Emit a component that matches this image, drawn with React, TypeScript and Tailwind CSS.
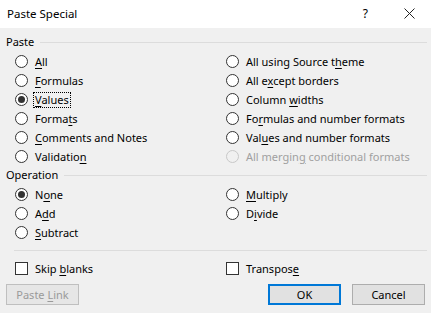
import React from "react";

const font = { fontFamily: '"Segoe UI", "Noto Sans", "Liberation Sans", sans-serif' };

function Label({ text, u, disabled }: { text: string; u: number; disabled?: boolean }) {
  return (
    <span className={disabled ? "text-[#a0a0a0]" : "text-black"}>
      {text.slice(0, u)}
      <span className="underline underline-offset-[2px]">{text[u]}</span>
      {text.slice(u + 1)}
    </span>
  );
}

function Radio({ text, u, checked, disabled, focus }: { text: string; u: number; checked?: boolean; disabled?: boolean; focus?: boolean }) {
  return (
    <div className="flex items-center h-[19px] gap-[7px]">
      <div
        className={
          "w-[13px] h-[13px] rounded-full border flex items-center justify-center shrink-0 " +
          (disabled ? "border-[#c8c8c8] bg-[#f0f0f0]" : "border-[#333333] bg-white")
        }
      >
        {checked && <div className="w-[7px] h-[7px] rounded-full bg-[#333333]" />}
      </div>
      {focus ? (
        <span className="border border-dotted border-black px-[1px] -mx-[2px] leading-[14px]">
          <Label text={text} u={u} />
        </span>
      ) : (
        <Label text={text} u={u} disabled={disabled} />
      )}
    </div>
  );
}

function Check({ text, u }: { text: string; u: number }) {
  return (
    <div className="flex items-center h-[19px] gap-[7px]">
      <div className="w-[13px] h-[13px] border border-[#333333] bg-white shrink-0" />
      <Label text={text} u={u} />
    </div>
  );
}

function Header({ text }: { text: string }) {
  return (
    <div className="flex items-center h-[16px] pl-[6px] pr-[4px]">
      <span className="text-black">{text}</span>
      <div className="flex-1 h-px bg-[#dcdcdc] ml-[6px]" />
    </div>
  );
}

export default function App() {
  return (
    <div className="w-[431px] h-[313px] bg-[#f0f0f0] text-[11px] leading-[16px] overflow-hidden" style={font}>
      <div className="h-[28px] bg-white flex items-center pl-[7px] pr-[16px]">
        <span className="flex-1 text-black text-[11.5px]">Paste Special</span>
        <span className="text-black text-[12px] mr-[36px]">?</span>
        <svg width="11" height="11" viewBox="0 0 11 11" className="mb-[1px]">
          <path d="M0.5 0.5 L10.5 10.5 M10.5 0.5 L0.5 10.5" stroke="#222" strokeWidth="1" />
        </svg>
      </div>

      <div className="mt-[6px]">
        <Header text="Paste" />
      </div>
      <div className="mt-[2px] grid grid-cols-[226px_1fr]">
        <div className="pl-[15px] flex flex-col">
          <Radio text="All" u={0} />
          <Radio text="Formulas" u={0} />
          <Radio text="Values" u={0} checked focus />
          <Radio text="Formats" u={5} />
          <Radio text="Comments and Notes" u={0} />
          <Radio text="Validation" u={9} />
        </div>
        <div className="flex flex-col">
          <Radio text="All using Source theme" u={18} />
          <Radio text="All except borders" u={5} />
          <Radio text="Column widths" u={7} />
          <Radio text="Formulas and number formats" u={2} />
          <Radio text="Values and number formats" u={3} />
          <Radio text="All merging conditional formats" u={10} disabled />
        </div>
      </div>

      <div className="mt-[1px]">
        <Header text="Operation" />
      </div>
      <div className="mt-[2px] grid grid-cols-[226px_1fr]">
        <div className="pl-[15px] flex flex-col">
          <Radio text="None" u={1} checked />
          <Radio text="Add" u={1} />
          <Radio text="Subtract" u={0} />
        </div>
        <div className="flex flex-col">
          <Radio text="Multiply" u={0} />
          <Radio text="Divide" u={1} />
        </div>
      </div>

      <div className="mt-[8px] ml-[14px] mr-[4px] h-px bg-[#dcdcdc]" />

      <div className="mt-[8px] grid grid-cols-[226px_1fr]">
        <div className="pl-[15px]">
          <Check text="Skip blanks" u={5} />
        </div>
        <div>
          <Check text="Transpose" u={8} />
        </div>
      </div>

      <div className="mt-[6px] flex items-center pl-[6px] pr-[6px]">
        <div className="w-[73px] h-[21px] border border-[#bfbfbf] bg-[#e6e6e6] flex items-center justify-center text-[#9a9a9a]">
          <span>
            Paste <span className="underline underline-offset-[2px]">L</span>ink
          </span>
        </div>
        <div className="flex-1" />
        <div className="w-[73px] h-[21px] border-2 border-[#0078d7] bg-[#e1e1e1] flex items-center justify-center text-black">
          OK
        </div>
        <div className="w-[73px] h-[21px] ml-[11px] border border-[#adadad] bg-[#e1e1e1] flex items-center justify-center text-black">
          Cancel
        </div>
      </div>
    </div>
  );
}
